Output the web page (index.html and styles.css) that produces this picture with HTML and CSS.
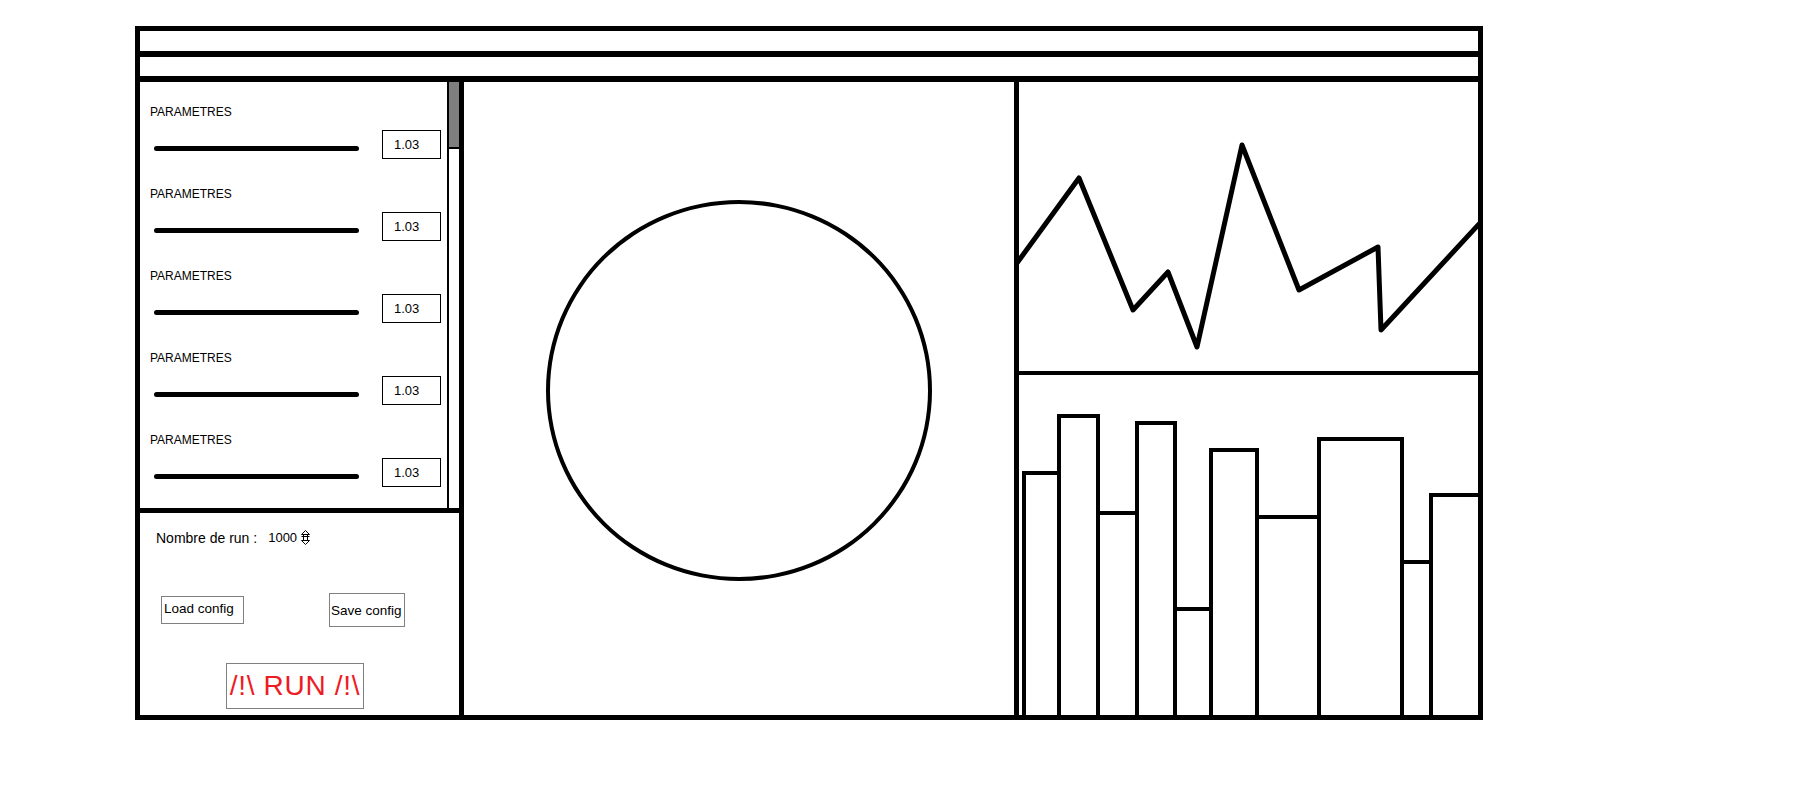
FILE: index.html
```html
<!DOCTYPE html>
<html lang="fr">
<head>
	<meta charset="utf-8">
	<title>Simulation</title>
	<link rel="stylesheet" href="styles.css">
</head>
<body>
<div id="window">
	<div class="titlebar"></div>
	<div class="menubar"></div>

	<div class="main">
		<!-- panneau de gauche : parametres + lancement -->
		<div class="sidebar">
			<div class="params">
				<div class="param-list">
					<div class="param">
						<p class="param-label">PARAMETRES</p>
						<div class="param-control">
							<div class="slider"></div>
							<input class="param-value" type="text" value="1.03">
						</div>
					</div>
					<div class="param">
						<p class="param-label">PARAMETRES</p>
						<div class="param-control">
							<div class="slider"></div>
							<input class="param-value" type="text" value="1.03">
						</div>
					</div>
					<div class="param">
						<p class="param-label">PARAMETRES</p>
						<div class="param-control">
							<div class="slider"></div>
							<input class="param-value" type="text" value="1.03">
						</div>
					</div>
					<div class="param">
						<p class="param-label">PARAMETRES</p>
						<div class="param-control">
							<div class="slider"></div>
							<input class="param-value" type="text" value="1.03">
						</div>
					</div>
					<div class="param">
						<p class="param-label">PARAMETRES</p>
						<div class="param-control">
							<div class="slider"></div>
							<input class="param-value" type="text" value="1.03">
						</div>
					</div>
				</div>
				<div class="scrollbar"><div class="thumb"></div></div>
			</div>

			<div class="run-settings">
				<div class="run-count">
					<span class="run-label">Nombre de run :</span>
					<span class="run-number">1000</span>
					<svg class="spinner" width="9" height="15" viewBox="0 0 9 15">
						<path d="M4.5 0.5 L8.5 4.5 L0.5 4.5 Z M0.5 6.5 L8.5 6.5 M2.5 4.5 L2.5 10.5 M6.5 4.5 L6.5 10.5 M0.5 10.5 L8.5 10.5 L4.5 14.5 Z" fill="none" stroke="#000" stroke-width="1"/>
					</svg>
				</div>
				<div class="config-buttons">
					<button class="config-btn load-btn">Load config</button>
					<button class="config-btn save-btn">Save config</button>
				</div>
				<button class="run-btn">/!\ RUN /!\</button>
			</div>
		</div>

		<!-- vue centrale -->
		<div class="viewer">
			<div class="circle"></div>
		</div>

		<!-- graphiques -->
		<div class="charts">
			<div class="line-chart">
				<svg width="459" height="289" viewBox="0 0 459 289">
					<polyline points="-2,181 60,96 114,228 149,190 178,265 223,63 280,208 359,165 362,248 461,141" fill="none" stroke="#000" stroke-width="5" stroke-linejoin="round"/>
				</svg>
			</div>
			<div class="bar-chart">
				<div class="bar" style="width:39px; height:244px"></div>
				<div class="bar" style="width:43px; height:301px"></div>
				<div class="bar" style="width:43px; height:204px"></div>
				<div class="bar" style="width:42px; height:294px"></div>
				<div class="bar" style="width:40px; height:108px"></div>
				<div class="bar" style="width:50px; height:267px"></div>
				<div class="bar" style="width:66px; height:200px"></div>
				<div class="bar" style="width:87px; height:278px"></div>
				<div class="bar" style="width:33px; height:155px"></div>
				<div class="bar" style="width:53px; height:222px"></div>
			</div>
		</div>
	</div>
</div>
</body>
</html>
```

FILE: styles.css
```css
html { background-color: white; }
body { 
	margin: 0;
	font-family: "Liberation Sans", Arial, sans-serif;
	color: black;
}

#window {
	width: 1348px;
	margin: 26px 0 0 135px;
	border: 5px solid black;
	box-sizing: border-box;
}
.titlebar { height: 20px; border-bottom: 6px solid black; }
.menubar { height: 19px; border-bottom: 6px solid black; }

.main { display: flex; height: 633px; }

/* panneau de gauche */
.sidebar {
	flex: none;
	width: 319px;
	border-right: 5px solid black;
	display: flex;
	flex-direction: column;
}
.params {
	height: 426px;
	border-bottom: 5px solid black;
	display: flex;
}
.param-list {
	flex: 1;
	padding: 23px 0 0 10px;
	display: flex;
	flex-direction: column;
	gap: 28px;
}
.param-label {
	margin: 0;
	font-size: 12px;
	line-height: 14px;
}
.param-control {
	display: flex;
	align-items: center;
	margin-top: 11px;
	padding-left: 4px;
}
.slider {
	width: 205px;
	height: 5px;
	margin-top: 8px;
	border-radius: 3px;
	background-color: black;
}
.param-value {
	width: 59px;
	height: 29px;
	margin-left: 23px;
	box-sizing: border-box;
	border: 1px solid black;
	padding: 0 0 0 11px;
	font-family: "Liberation Sans", Arial, sans-serif;
	font-size: 13px;
	color: black;
	outline: none;
}
.scrollbar {
	width: 10px;
	border-left: 2px solid black;
}
.thumb {
	height: 65px;
	background-color: #7f7f7f;
	border-bottom: 2px solid black;
}

.run-settings {
	flex: 1;
	padding: 16px 0 0 16px;
	display: flex;
	flex-direction: column;
	align-items: flex-start;
}
.run-count {
	display: flex;
	align-items: center;
	height: 17px;
}
.run-label { font-size: 14px; margin-right: 11px; }
.run-number { font-size: 13px; margin-right: 4px; }
.spinner { display: block; }

.config-buttons {
	align-self: stretch;
	display: flex;
	justify-content: space-between;
	align-items: center;
	margin: 47px 54px 0 5px;
}
.config-btn {
	background-color: white;
	border: 1px solid #808080;
	font-family: "Liberation Sans", Arial, sans-serif;
	font-size: 13.5px;
	color: black;
	text-align: left;
	margin: 0;
}
.load-btn { width: 83px; height: 28px; padding: 0 0 4px 2px; }
.save-btn { width: 76px; height: 34px; padding: 0 0 0 1px; }

.run-btn {
	width: 138px;
	height: 46px;
	margin: 36px 0 0 70px;
	padding: 0;
	background-color: white;
	border: 1px solid #808080;
	font-family: "Liberation Sans", Arial, sans-serif;
	font-size: 28px;
	letter-spacing: .7px;
	color: #ed1c24;
}

/* vue centrale */
.viewer {
	flex: none;
	width: 555px;
	border-right: 5px solid black;
	display: flex;
	justify-content: center;
	align-items: center;
	padding-bottom: 16px;
	box-sizing: border-box;
}
.circle {
	width: 386px;
	height: 381px;
	box-sizing: border-box;
	border: 4px solid black;
	border-radius: 50%;
}

/* graphiques */
.charts {
	flex: none;
	width: 459px;
	display: flex;
	flex-direction: column;
}
.line-chart {
	height: 289px;
	border-bottom: 4px solid black;
}
.line-chart svg { display: block; }
.bar-chart {
	flex: 1;
	display: flex;
	align-items: flex-end;
	padding-left: 3px;
	overflow: hidden;
}
.bar {
	flex: none;
	box-sizing: border-box;
	border: 4px solid black;
	border-bottom: 0;
	margin-left: -4px;
}
.bar:first-child { margin-left: 0; }
```
